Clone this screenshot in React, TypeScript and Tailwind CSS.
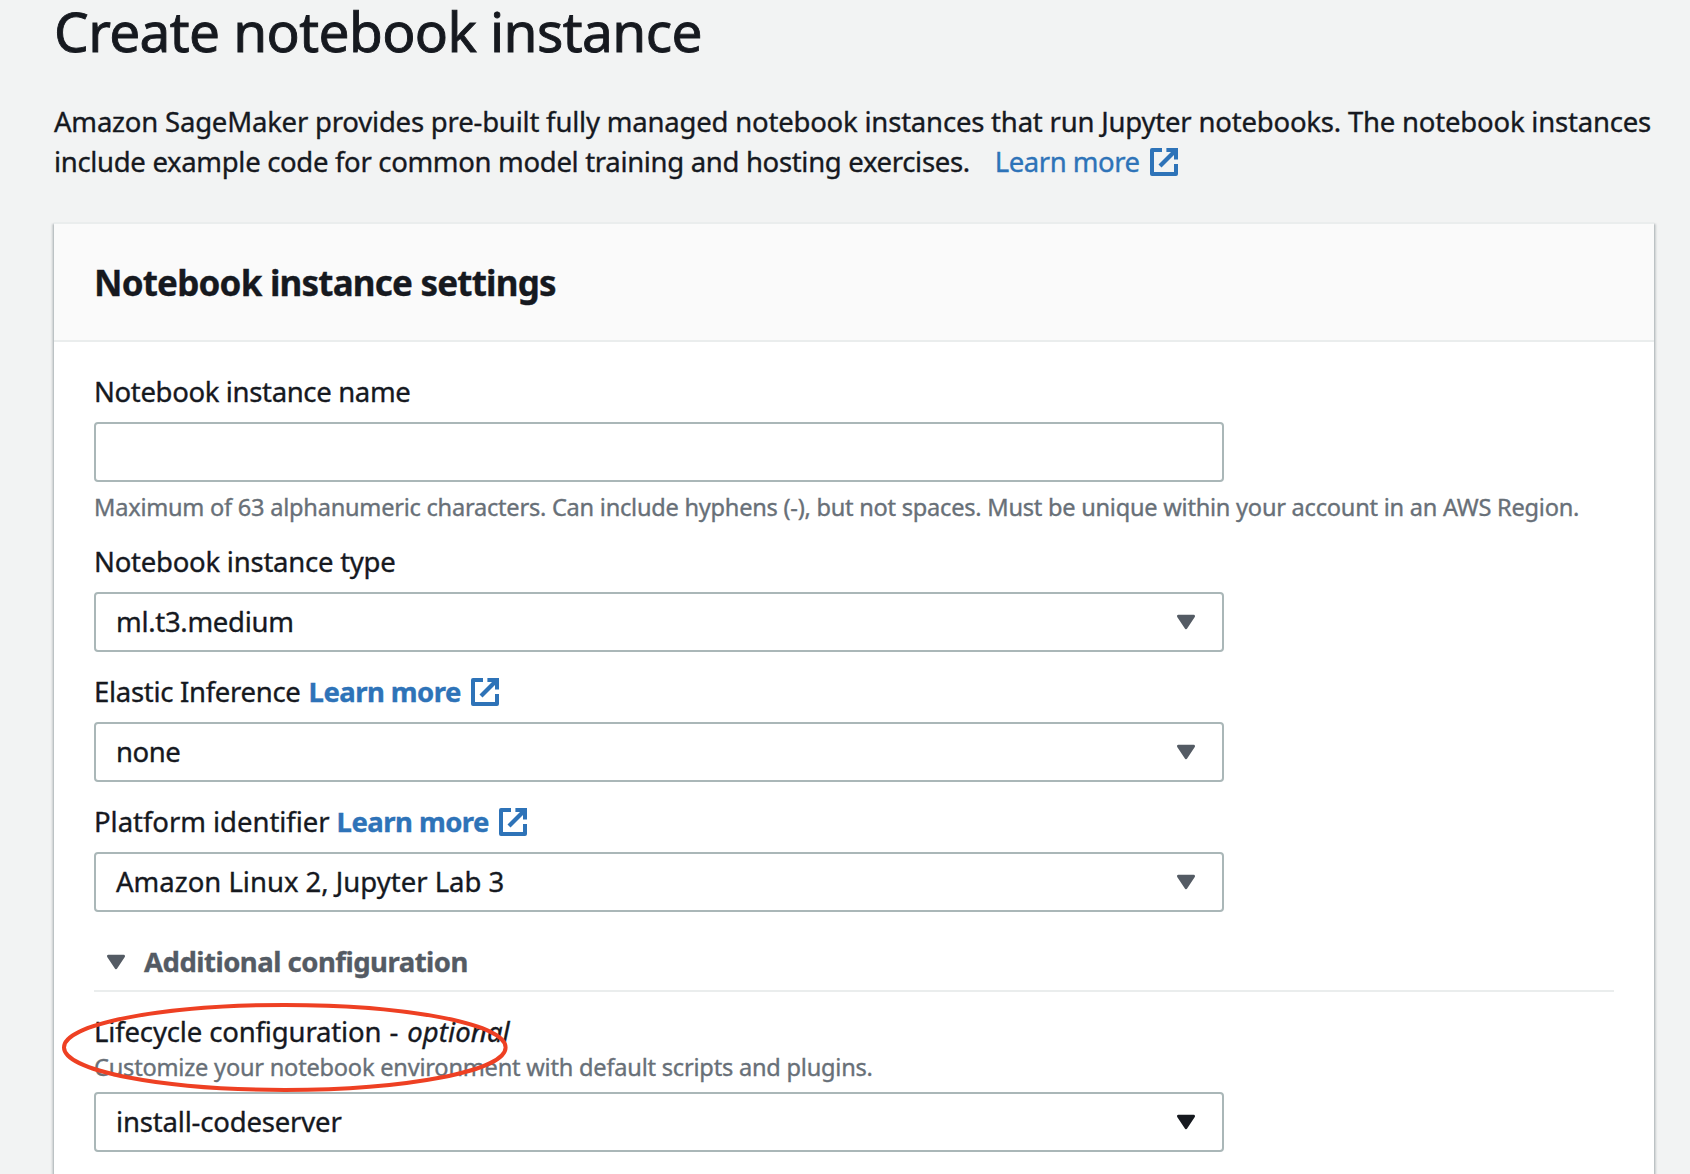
import type { ReactNode } from "react";

function ExternalIcon({ className = "" }: { className?: string }) {
  return (
    <svg
      viewBox="1 1 14 14"
      className={`inline-block h-7 w-7 align-[-4px] ${className}`}
      fill="none"
      stroke="currentColor"
      strokeWidth="2"
    >
      <path d="M14 9v5H2V2h5" strokeLinejoin="round" />
      <path d="M9.2 2H14v4.8" />
      <path d="M6 10l7.5-7.5" strokeWidth="2.1" />
    </svg>
  );
}

function Caret({ className = "" }: { className?: string }) {
  return (
    <svg viewBox="0 0 20 16" className={`h-4 w-5 shrink-0 ${className}`} fill="currentColor" stroke="currentColor">
      <path d="M1.5 1.5h17L10 14.5z" strokeWidth="3" strokeLinejoin="round" transform="translate(1 .8) scale(.9)" />
    </svg>
  );
}

function Label({ children, className = "" }: { children: ReactNode; className?: string }) {
  return <div className={`h-10 whitespace-nowrap leading-10 ${className}`}>{children}</div>;
}

function Select({ value, className = "", caret = "text-[#545b64]" }: { value: string; className?: string; caret?: string }) {
  return (
    <div className="flex h-[60px] w-[1130px] items-center justify-between rounded-[4px] border-2 border-[#aab7b8] bg-white pr-[26px] pl-5">
      <span className={className}>{value}</span>
      <Caret className={caret} />
    </div>
  );
}

function BoldLink({ className = "" }: { className?: string }) {
  return (
    <a className={`font-bold text-[#2e73b8] ${className}`}>
      <span className="tracking-[-0.55px]">Learn more</span>
      <ExternalIcon className="ml-[10px]" />
    </a>
  );
}

export default function App() {
  return (
    <div className="h-[1174px] w-[1690px] overflow-hidden bg-[#f2f3f3] pl-[54px] font-['Noto_Sans',sans-serif] text-[27.5px] text-[#16191f] [-webkit-text-stroke:0.35px]">
      <h1 className="h-[62px] text-[55px] leading-[62px] tracking-[-0.6px] [-webkit-text-stroke:0.9px]">Create notebook instance</h1>
      <div className="mt-10 h-20 leading-10 whitespace-nowrap">
        <div className="tracking-[-0.2px]">
          Amazon SageMaker provides pre-built fully managed notebook instances that run Jupyter notebooks. The notebook instances
        </div>
        <div>
          <span className="tracking-[-0.32px]">include example code for common model training and hosting exercises.</span>
          <a className="ml-[25px] text-[#2e73b8]">
            <span className="tracking-[-0.48px]">Learn more</span>
            <ExternalIcon className="ml-[10px]" />
          </a>
        </div>
      </div>

      <section className="mt-10 h-[1000px] w-[1600px] border-t-2 border-[#eaeded] bg-white shadow-[0_2px_2px_0_rgba(0,28,36,0.3),2px_2px_2px_0_rgba(0,28,36,0.15),-2px_2px_2px_0_rgba(0,28,36,0.15)]">
        <header className="flex h-[118px] items-center border-b-2 border-[#eaeded] bg-[#fafafa] px-10 pt-0.5">
          <h2 className="text-[35px] font-bold tracking-[-0.8px]">Notebook instance settings</h2>
        </header>

        <div className="px-10 pt-[30px]">
          <Label className="tracking-[-0.35px]">Notebook instance name</Label>
          <input className="mt-[10px] block h-[60px] w-[1130px] rounded-[4px] border-2 border-[#aab7b8] bg-white px-5" />
          <p className="mt-[7px] h-9 text-[23.6px] leading-9 tracking-[-0.245px] whitespace-nowrap text-[#687078]">
            Maximum of 63 alphanumeric characters. Can include hyphens (-), but not spaces. Must be unique within your account in an AWS Region.
          </p>

          <Label className="mt-[17px] mb-[10px] tracking-[-0.24px]">Notebook instance type</Label>
          <Select value="ml.t3.medium" className="tracking-[-0.3px]" />

          <Label className="mt-5 mb-[10px]">
            <span className="tracking-[-0.3px]">Elastic Inference</span>
            <BoldLink className="ml-2" />
          </Label>
          <Select value="none" className="tracking-[-0.5px]" />

          <Label className="mt-5 mb-[10px]">
            <span className="tracking-[-0.04px]">Platform identifier</span>
            <BoldLink className="ml-[7px]" />
          </Label>
          <Select value="Amazon Linux 2, Jupyter Lab 3" />

          <div className="mt-[30px] flex h-[50px] items-start border-b-2 border-[#eaeded] pl-3 text-[#545b64]">
            <Caret className="mt-[12px]" />
            <span className="ml-[18px] leading-10 font-bold tracking-[-0.5px]">Additional configuration</span>
          </div>

          <div className="relative mt-5">
            <div className="h-[38px] leading-10 whitespace-nowrap">
              <span className="tracking-[-0.15px]">Lifecycle configuration</span>
              <span className="ml-2">-</span>
              <i className="ml-[9px] tracking-[0.1px]">optional</i>
            </div>
            <p className="h-[34px] text-[23.6px] leading-[34px] tracking-[-0.22px] whitespace-nowrap text-[#687078]">
              Customize your notebook environment with default scripts and plugins.
            </p>
            <svg className="absolute top-[-10px] left-[-33px] h-[91px] w-[448px]" viewBox="0 0 448 91" fill="none">
              <ellipse cx="223.8" cy="45.4" rx="220.8" ry="42.5" stroke="#ee4023" strokeWidth="4" />
            </svg>
          </div>
          <div className="mt-2">
            <Select value="install-codeserver" className="tracking-[-0.18px]" caret="text-[#16191f]" />
          </div>
        </div>
      </section>
    </div>
  );
}
